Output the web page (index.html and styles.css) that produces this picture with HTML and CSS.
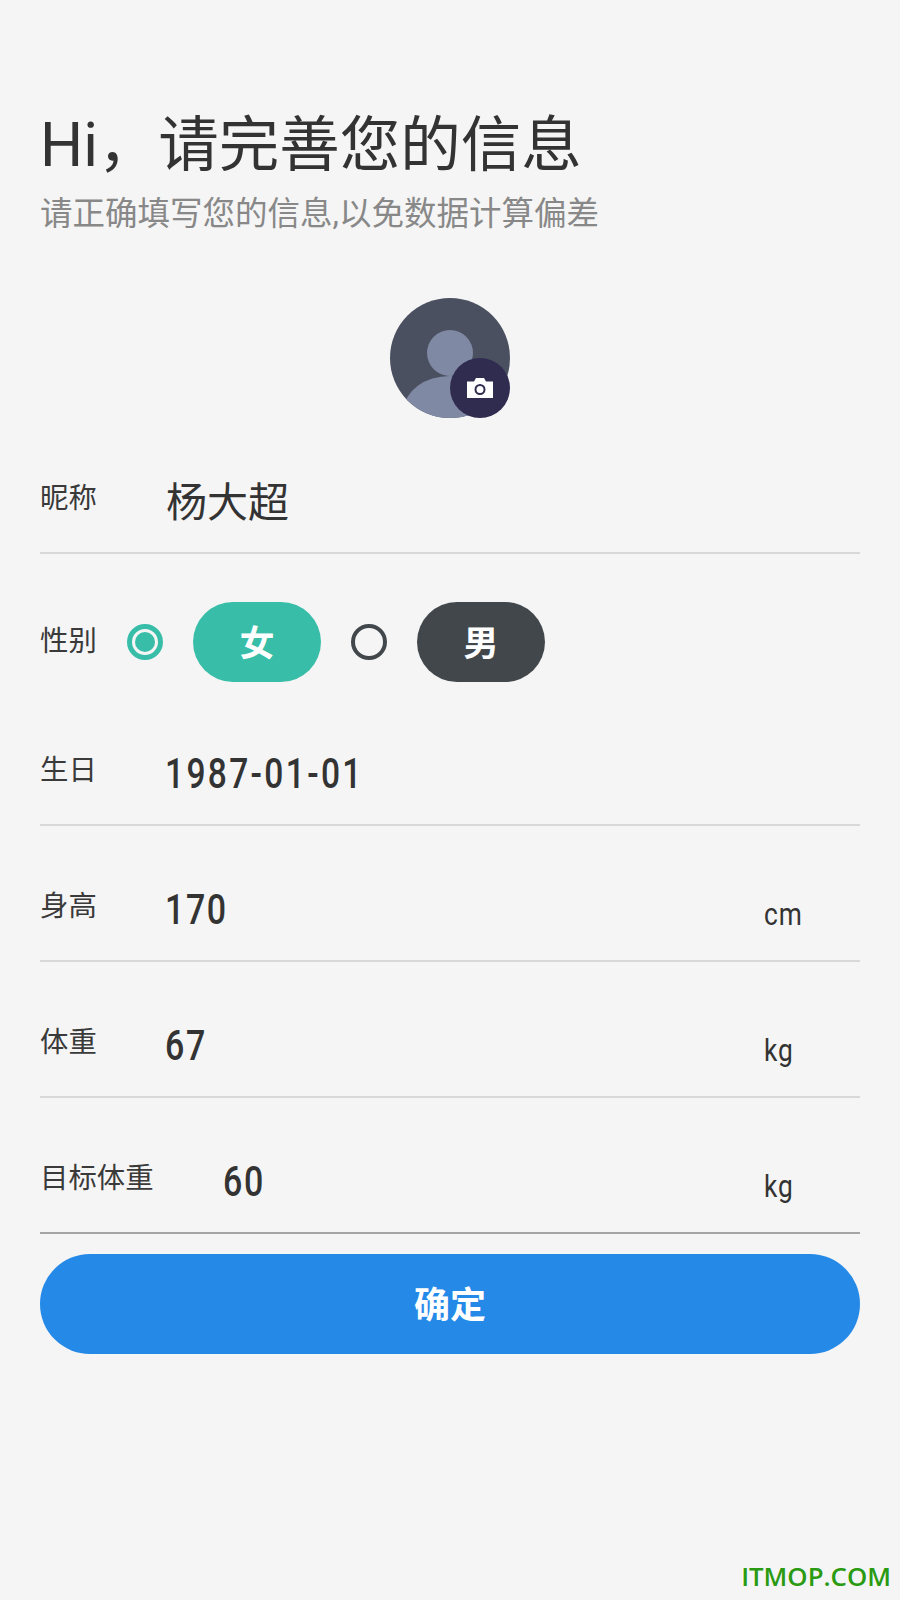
FILE: index.html
```html
<!DOCTYPE html>
<html lang="zh-CN">
<head>
    <meta charset="UTF-8">
    <meta name="viewport" content="width=device-width, initial-scale=1.0">
    <title>完善信息</title>
    <link rel="stylesheet" href="styles.css">
</head>
<body>
    <div class="page">
        <h1 class="title">Hi，请完善您的信息</h1>
        <p class="subtitle">请正确填写您的信息,以免数据计算偏差</p>

        <div class="avatar">
            <svg class="avatar-img" viewBox="0 0 120 120">
                <defs>
                    <clipPath id="avatar-clip"><circle cx="60" cy="60" r="60"/></clipPath>
                </defs>
                <g clip-path="url(#avatar-clip)">
                    <rect width="120" height="120" fill="#4a5060"/>
                    <circle cx="60" cy="55" r="23" fill="#8089a3"/>
                    <ellipse cx="60" cy="112" rx="46" ry="34" fill="#8089a3"/>
                </g>
            </svg>
            <span class="camera">
                <svg viewBox="0 0 26 20" width="26" height="20">
                    <path fill="#fff" fill-rule="evenodd" d="M0 3.500h7l2-3.500h8l2 3.500h7V20H0zM13 6a5.500 5.500 0 1 0 0 11 5.500 5.500 0 0 0 0-11zM13 8a3.500 3.500 0 1 1 0 7 3.500 3.500 0 0 1 0-7z"/>
                </svg>
            </span>
        </div>

        <div class="row">
            <span class="label">昵称</span>
            <span class="value-name">杨大超</span>
        </div>

        <div class="gender">
            <span class="label">性别</span>
            <span class="radio radio-on"></span>
            <span class="pill pill-female">女</span>
            <span class="radio radio-off"></span>
            <span class="pill pill-male">男</span>
        </div>

        <div class="row">
            <span class="label">生日</span>
            <span class="value value-date">1987-01-01</span>
        </div>
        <div class="row">
            <span class="label">身高</span>
            <span class="value">170</span>
            <span class="unit">cm</span>
        </div>
        <div class="row">
            <span class="label">体重</span>
            <span class="value">67</span>
            <span class="unit">kg</span>
        </div>
        <div class="row row-last">
            <span class="label label-wide">目标体重</span>
            <span class="value">60</span>
            <span class="unit">kg</span>
        </div>

        <button class="submit" type="button">确定</button>
    </div>
    <div class="watermark">ITMOP.COM</div>
</body>
</html>
```

FILE: styles.css
```css
* {
    box-sizing: border-box;
}
body {
    margin: 0;
    height: 1600px;
    background-color: #f5f5f5;
    color: #333;
    font-family: "Roboto", "Noto Sans CJK SC", sans-serif;
    display: flex;
    flex-direction: column;
    justify-content: space-between;
    overflow: hidden;
}
.page {
    padding: 108px 40px 0;
}
.title {
    margin: 0;
    font-size: 60.5px;
    font-weight: 400;
    line-height: 76px;
    color: #333;
}
.subtitle {
    margin: 8px 0 0;
    font-size: 32.5px;
    line-height: 44px;
    color: #888;
}

/* avatar */
.avatar {
    position: relative;
    width: 120px;
    height: 120px;
    margin: 62px auto 0;
}
.avatar-img {
    display: block;
    width: 120px;
    height: 120px;
}
.camera {
    position: absolute;
    right: 0;
    bottom: 0;
    width: 60px;
    height: 60px;
    border-radius: 50%;
    background-color: #2f2c4f;
    display: flex;
    align-items: center;
    justify-content: center;
}

/* form rows */
.row {
    display: flex;
    height: 136px;
    align-items: flex-start;
    border-bottom: 2px solid #d8d8d8;
    padding-top: 60px;
}
.row-last {
    border-bottom-color: #a5a5a5;
}
.label {
    font-size: 28.4px;
    line-height: 42px;
    color: #3a3a3a;
    width: 125px;
    flex-shrink: 0;
}
.label-wide {
    width: 183px;
}
/* digits in the app are a narrow DIN-like face, squeeze Roboto to get close */
.value {
    font-size: 43px;
    font-weight: 500;
    line-height: 47px;
    letter-spacing: 2px;
    flex: 1;
    transform: scaleX(0.79);
    transform-origin: left center;
}
.value-date {
    letter-spacing: 3px;
    transform: scaleX(0.78);
}
.value-name {
    font-size: 41px;
    line-height: 50px;
    margin-left: 1px;
}
.unit {
    font-size: 31px;
    line-height: 58px;
    width: 96px;
    letter-spacing: 1px;
    transform: scaleX(0.85);
    transform-origin: left center;
}

/* gender */
.gender {
    display: flex;
    align-items: center;
    margin-top: 48px;
    margin-bottom: 8px;
    height: 80px;
}
.gender .label {
    width: 87px;
}
.radio {
    width: 36px;
    height: 36px;
    border-radius: 50%;
    flex-shrink: 0;
    display: flex;
    align-items: center;
    justify-content: center;
}
.radio-on {
    border: 5px solid #38bea8;
}
.radio-on::after {
    content: "";
    width: 20px;
    height: 20px;
    border-radius: 50%;
    background-color: #38bea8;
}
.radio-off {
    border: 4px solid #41474b;
    margin-left: 30px;
}
.pill {
    width: 128px;
    height: 80px;
    margin-left: 30px;
    border-radius: 40px;
    color: #fff;
    font-size: 35px;
    font-weight: 700;
    display: flex;
    align-items: center;
    justify-content: center;
    padding-bottom: 3px;
}
.pill-female {
    background-color: #38bea8;
}
.pill-male {
    background-color: #41474b;
}

.submit {
    display: block;
    width: 100%;
    height: 100px;
    margin-top: 20px;
    padding: 0 0 4px;
    border: none;
    border-radius: 50px;
    background-color: #2589e8;
    color: #fff;
    font-family: inherit;
    font-size: 36px;
    font-weight: 700;
}
.watermark {
    text-align: right;
    padding: 0 9px 8px 0;
    font-family: "Open Sans", sans-serif;
    font-size: 25.8px;
    line-height: 32px;
    font-weight: 600;
    color: #2a9a12;
}
```
